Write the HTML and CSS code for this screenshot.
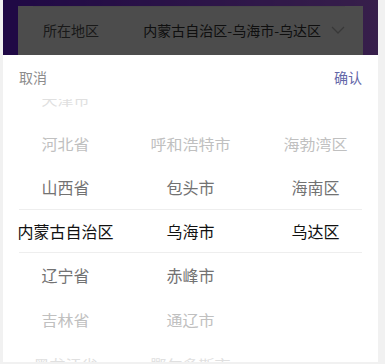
FILE: index.html
```html
<!DOCTYPE html>
<html lang="zh-CN">
<head>
    <meta charset="UTF-8">
    <meta name="viewport" content="width=device-width, initial-scale=1.0">
    <title>所在地区</title>
    <link rel="stylesheet" href="styles.css">
</head>
<body>
    <div class="app">
        <div class="card">
            <div class="row">
                <span class="label">所在地区</span>
                <span class="value">内蒙古自治区-乌海市-乌达区</span>
                <svg class="arrow" width="14" height="8" viewBox="0 0 14 8">
                    <path d="M1 1 L7 7 L13 1" fill="none" stroke="#bbb" stroke-width="1.3"/>
                </svg>
            </div>
        </div>

        <div class="mask"></div>

        <div class="popup">
            <div class="popup-header">
                <span class="btn-cancel">取消</span>
                <span class="btn-confirm">确认</span>
            </div>
            <div class="picker">
                <div class="picker-col">
                    <div class="item far3">天津市</div>
                    <div class="item far2">河北省</div>
                    <div class="item far1">山西省</div>
                    <div class="item active">内蒙古自治区</div>
                    <div class="item far1">辽宁省</div>
                    <div class="item far2">吉林省</div>
                    <div class="item far3">黑龙江省</div>
                </div>
                <div class="picker-col">
                    <div class="item"></div>
                    <div class="item far2">呼和浩特市</div>
                    <div class="item far1">包头市</div>
                    <div class="item active">乌海市</div>
                    <div class="item far1">赤峰市</div>
                    <div class="item far2">通辽市</div>
                    <div class="item far3">鄂尔多斯市</div>
                </div>
                <div class="picker-col">
                    <div class="item"></div>
                    <div class="item far2">海勃湾区</div>
                    <div class="item far1">海南区</div>
                    <div class="item active">乌达区</div>
                </div>
                <div class="picker-frame"></div>
            </div>
        </div>
    </div>
</body>
</html>
```

FILE: styles.css
```css
body {
    margin: 0;
    background-color: #f1f1f1;
    font-family: "Noto Sans CJK SC", "Noto Sans", sans-serif;
}
.app {
    position: relative;
    width: 375px;
    height: 362px;
    margin-left: 3px;
    overflow: hidden;
    background: linear-gradient(to right, #6a1ee6, #b868fa);
}
.card {
    margin: 0 15px;
    height: 362px;
    background-color: white;
}
.row {
    display: flex;
    align-items: center;
    height: 46px;
    margin: 6px 18px 0 15px;
    padding-left: 10px;
    border-top: 1px solid #f0f0f0;
    font-size: 14px;
}
.label {
    color: #555;
}
.value {
    margin-left: auto;
    color: #333;
}
.arrow {
    margin-left: 10px;
}
.mask {
    position: absolute;
    inset: 0;
    background-color: rgba(0, 0, 0, 0.7);
}
.popup {
    position: absolute;
    left: 0;
    right: 0;
    bottom: 0;
    height: 307px;
    background-color: white;
}
.popup-header {
    display: flex;
    justify-content: space-between;
    align-items: center;
    height: 44px;
    padding: 0 16px;
    font-size: 14px;
}
.btn-cancel {
    color: #8c8c8c;
}
.btn-confirm {
    color: #6467a8;
}
.picker {
    position: relative;
    display: grid;
    grid-template-columns: repeat(3, 1fr);
    height: 263px;
    overflow: hidden;
}
.picker-col {
    margin-top: -22px;
}
.item {
    height: 44px;
    line-height: 44px;
    text-align: center;
    font-size: 16px;
    white-space: nowrap;
    color: #111;
}
.far1 {
    color: #727272;
}
.far2 {
    color: #c0c0c0;
    transform: scaleY(0.94);
}
.far3 {
    color: #e0e0e0;
    transform: scaleY(0.8);
}
.picker-frame {
    position: absolute;
    left: 16px;
    right: 16px;
    top: 110px;
    height: 42px;
    border-top: 1px solid #eeeeee;
    border-bottom: 1px solid #eeeeee;
    pointer-events: none;
}
```
